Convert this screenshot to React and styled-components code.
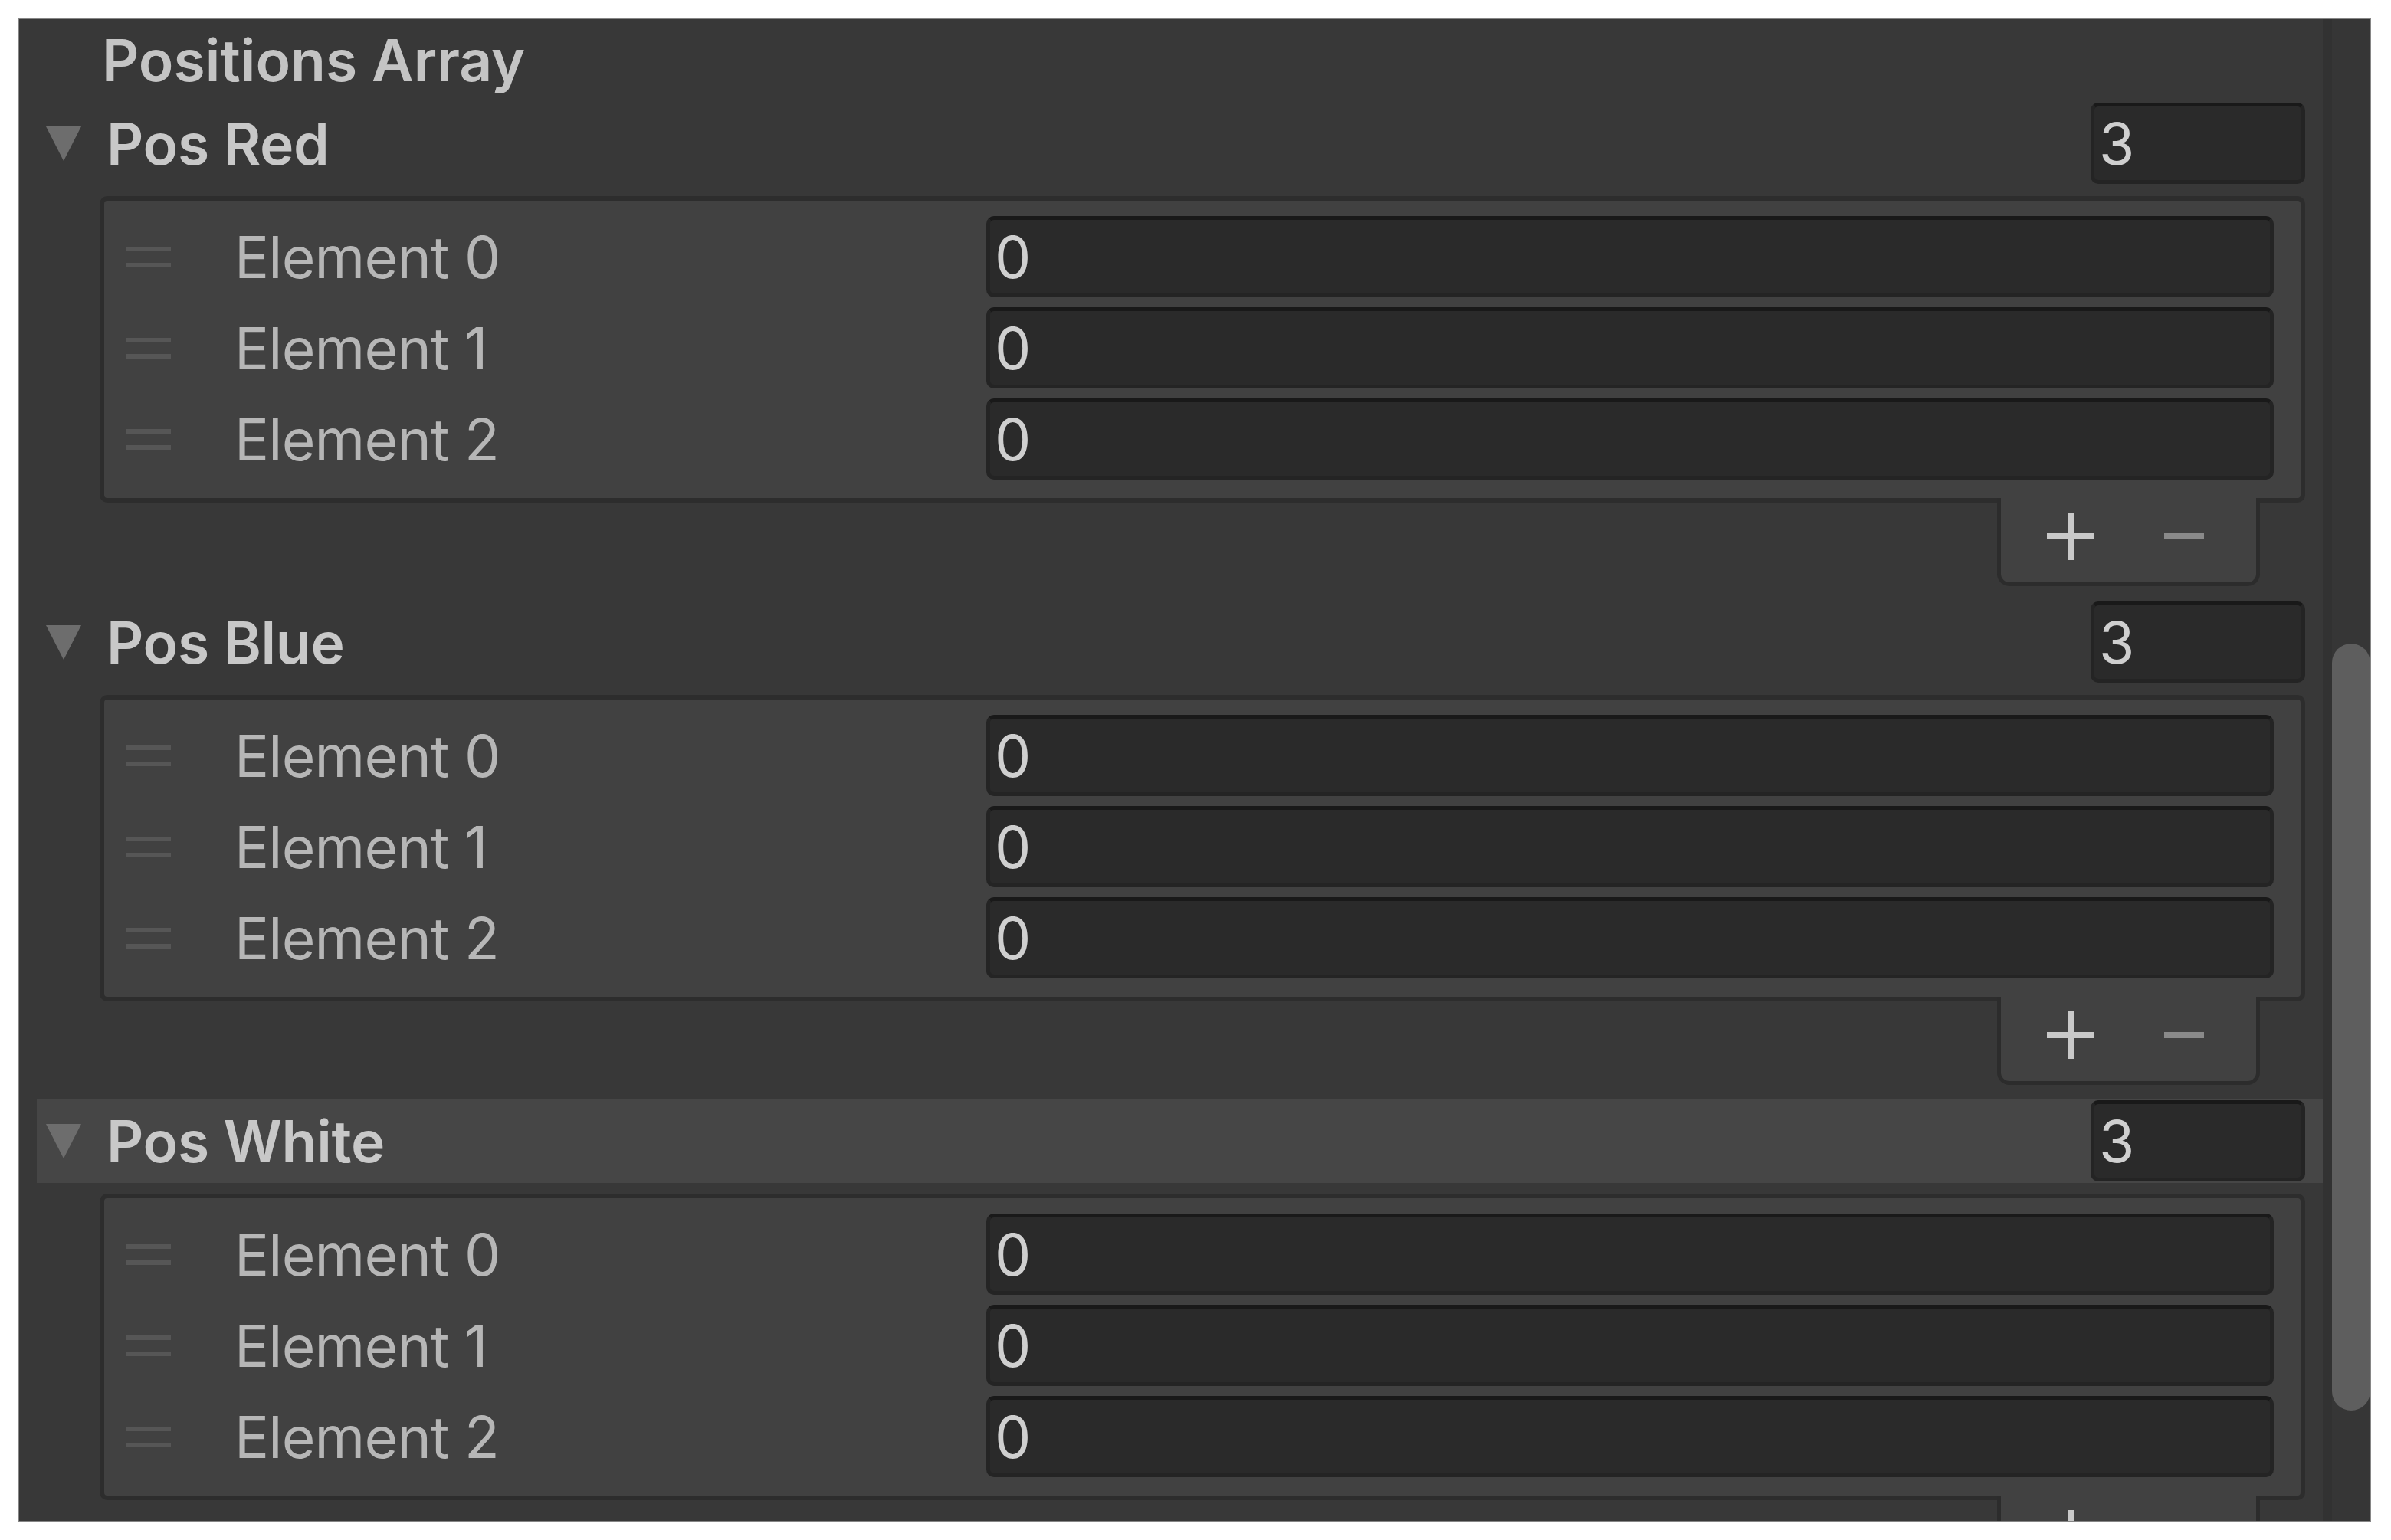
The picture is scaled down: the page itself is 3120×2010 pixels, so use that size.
import React from 'react';
import styled, { createGlobalStyle } from 'styled-components';

const GlobalStyle = createGlobalStyle`
  html, body { margin: 0; padding: 0; background: #ffffff; }
  body { font-family: Inter, "Noto Sans", "Liberation Sans", sans-serif; }
  * { box-sizing: border-box; }
`;

const Page = styled.div`
  width: 3120px;
  height: 2010px;
  padding: 24px 0 0 24px;
`;

const Panel = styled.div`
  width: 3070px;
  height: 1962px;
  border: 1px solid #868686;
  background: #383838;
  display: flex;
  overflow: hidden;
`;

const Content = styled.div`
  flex: 1;
  min-width: 0;
  display: flex;
  flex-direction: column;
`;

const SectionTitle = styled.div`
  height: 107px;
  flex: none;
  display: flex;
  align-items: center;
  padding-left: 108px;
  font-size: 75px;
  font-weight: 600;
  color: #c4c4c4;
  white-space: nowrap;
`;

const Group = styled.div`
  flex: none;
  display: flex;
  flex-direction: column;
  margin-bottom: 18px;
`;

const Header = styled.div`
  height: 110px;
  margin-left: 23px;
  padding-left: 12px;
  display: flex;
  align-items: center;
  background: ${p => (p.$active ? '#464646' : 'transparent')};
`;

const Arrow = styled.svg`
  width: 46px;
  height: 45px;
  flex: none;
`;

const HeaderLabel = styled.div`
  flex: 1;
  margin-left: 33px;
  font-size: 75px;
  font-weight: 600;
  letter-spacing: -0.3px;
  color: #c8c8c8;
  white-space: nowrap;
`;

const Field = styled.div`
  height: 106px;
  display: flex;
  align-items: center;
  padding-left: 6px;
  background: #2a2a2a;
  border: 5px solid #242424;
  border-top-color: #191919;
  border-radius: 10px;
  font-size: 75px;
  color: #cfcfcf;
`;

const CountField = styled(Field)`
  width: 280px;
  flex: none;
  margin-right: 23px;
`;

const ValueField = styled(Field)`
  flex: 1;
  min-width: 0;
`;

const ListBox = styled.div`
  margin: 14px 23px 0 105px;
  border: 6px solid #2d2d2d;
  border-radius: 10px;
  background: #414141;
  padding: 20px 35px 24px 29px;
  display: flex;
  flex-direction: column;
  gap: 13px;
`;

const ElementRow = styled.div`
  height: 106px;
  display: flex;
  align-items: center;
`;

const Handle = styled.div`
  width: 58px;
  height: 27px;
  flex: none;
  border-top: 6px solid #565656;
  border-bottom: 6px solid #565656;
  margin-right: 83px;
`;

const ElementLabel = styled.div`
  width: 981px;
  flex: none;
  font-size: 75px;
  font-weight: 400;
  letter-spacing: -0.8px;
  color: #b6b6b6;
  white-space: nowrap;
`;

const Footer = styled.div`
  align-self: flex-end;
  width: 343px;
  height: 115px;
  margin: -6px 82px 0 0;
  background: #414141;
  border: 5px solid #2c2c2c;
  border-top: none;
  border-radius: 0 0 16px 16px;
  display: flex;
  align-items: center;
  padding: 0 0 10px 17px;
`;

const FooterButton = styled.div`
  width: 148px;
  height: 80px;
  display: flex;
  align-items: center;
  justify-content: center;
`;

const Scrollbar = styled.div`
  width: 62px;
  flex: none;
  background: #363636;
  border-left: 12px solid #323232;
  display: flex;
  flex-direction: column;
`;

const Thumb = styled.div`
  margin-top: 815px;
  height: 1001px;
  background: #5e5e5e;
  border-radius: 25px;
`;

const PlusIcon = () => (
  <svg width="62" height="62" viewBox="0 0 62 62">
    <rect x="0" y="27" width="62" height="8" fill="#c9c9c9" />
    <rect x="27" y="0" width="8" height="62" fill="#c9c9c9" />
  </svg>
);

const MinusIcon = () => (
  <svg width="52" height="8" viewBox="0 0 52 8">
    <rect x="0" y="0" width="52" height="8" fill="#8a8a8a" />
  </svg>
);

const groups = [
  { name: 'Pos Red', active: false },
  { name: 'Pos Blue', active: false },
  { name: 'Pos White', active: true },
];

const ArrayGroup = ({ name, active }) => (
  <Group>
    <Header $active={active}>
      <Arrow viewBox="0 0 46 45">
        <polygon points="0,0 46,0 23,45" fill="#6d6d6d" />
      </Arrow>
      <HeaderLabel>{name}</HeaderLabel>
      <CountField>3</CountField>
    </Header>
    <ListBox>
      {[0, 1, 2].map(i => (
        <ElementRow key={i}>
          <Handle />
          <ElementLabel>Element {i}</ElementLabel>
          <ValueField>0</ValueField>
        </ElementRow>
      ))}
    </ListBox>
    <Footer>
      <FooterButton><PlusIcon /></FooterButton>
      <FooterButton><MinusIcon /></FooterButton>
    </Footer>
  </Group>
);

export default function App() {
  return (
    <>
      <GlobalStyle />
      <Page>
        <Panel>
          <Content>
            <SectionTitle>Positions Array</SectionTitle>
            {groups.map(g => (
              <ArrayGroup key={g.name} name={g.name} active={g.active} />
            ))}
          </Content>
          <Scrollbar>
            <Thumb />
          </Scrollbar>
        </Panel>
      </Page>
    </>
  );
}
